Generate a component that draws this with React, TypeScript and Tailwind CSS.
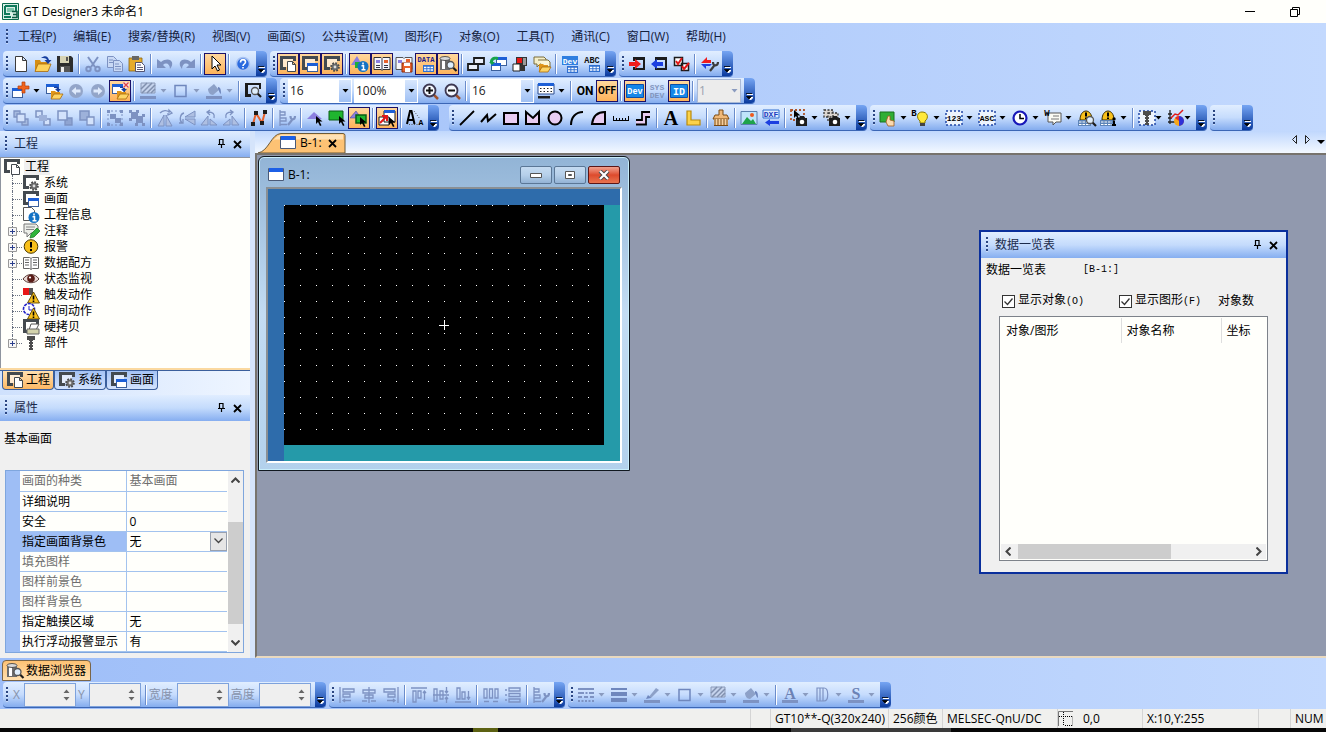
import { useState, type ReactNode } from 'react';

const D = '#7d92c2';
const K = '#1b1b1b';
const G = '#444a4f';

const frame = (
  <g>
    <path d="M3 3h10v8H3z" fill="#fff" opacity="0.6" />
    <path d="M0 0h16v5h-3V3H3v8h3v3H0z" fill={G} />
  </g>
);
const miniWin = (x: number, y: number, w = 10, h = 8) => (
  <g>
    <rect x={x + 0.5} y={y + 0.5} width={w} height={h} fill="#fff" stroke="#3b5f9c" />
    <rect x={x} y={y} width={w + 1} height="3" fill="#1c5fd6" />
  </g>
);
const folder = (
  <g>
    <path d="M5 8h4l1 1h4v6H5z" fill="#e0951a" />
    <path d="M8 11h9l-3 5H5z" fill="#fdd465" stroke="#a8690a" strokeWidth="0.8" />
  </g>
);
const grid = (x: number, y: number, c = '#2f6fd0') => (
  <g>
    <rect x={x} y={y} width="11" height="7" fill={c} />
    <path d={`M${x + 1} ${y + 2.5}h9M${x + 1} ${y + 5}h9`} stroke="#fff" strokeWidth="1.4" strokeDasharray="2.4 0.9" />
  </g>
);
const gear = (
  <g>
    <circle cx="11" cy="11" r="3.6" fill="#777" stroke="#4a4a4a" strokeWidth="2.4" strokeDasharray="1.6 1.2" />
    <circle cx="11" cy="11" r="3" fill="#6a6a6a" />
    <circle cx="11" cy="11" r="1.4" fill="#ddd" />
  </g>
);
const lens = (x: number, y: number) => (
  <g>
    <path d={`M${x + 2} ${y + 2}l4 4`} stroke={K} strokeWidth="2.2" />
    <circle cx={x} cy={y} r="3.5" fill="#dfeefc" stroke="#555" strokeWidth="1.3" />
  </g>
);
const arrowCursor = (x: number, y: number) => (
  <path d={`M${x} ${y}v8l2-2 2 4 1.500-.8-2-3.700h3z`} fill="#000" />
);
const warn = (
  <g>
    <path d="M10.500 5l6 11h-12z" fill="#f8c01b" stroke="#5a4300" strokeWidth="0.9" />
    <path d="M10.500 8.500v4M10.500 13.500v1.500" stroke="#000" strokeWidth="1.600" />
  </g>
);
const info = (
  <g>
    <circle cx="11" cy="10.500" r="5.500" fill="#1573c4" />
    <path d="M11 6.500v2M9.500 9.700h2v4h-2 4" stroke="#fff" strokeWidth="1.500" fill="none" />
  </g>
);
const screws = (
  <path d="M4 1h8v4h-2v1H6V5H4zM6 7h4v2H6zM6 10h4v2H6zM6 13h4v2H6zM7 6h2v9H7z" fill="#4c4c4c" />
);
const label = (t: string, x: number, y: number, size: number, fill: string) => (
  <text x={x} y={y} fontSize={size} fontWeight={700} fill={fill} textAnchor="middle" fontFamily="Liberation Mono, monospace">
    {t}
  </text>
);
const alarm = (
  <g>
    <path d="M2 10c0-12 12-12 12 0z" fill="#f8c01b" stroke="#3a2c00" />
    <path d="M8 2.500v4M8 7.500v1.500" stroke="#000" strokeWidth="2" />
    <rect x="0" y="10" width="13" height="6" fill="#5d84b8" />
    <path d="M1 12h11M1 14.500h11" stroke="#fff" strokeDasharray="2.500 1" />
  </g>
);
const camera = (
  <g>
    <path d="M5 8h3l1-2h4l1 2h2v8H5z" fill="#1d1d1d" />
    <circle cx="11" cy="12" r="2.300" fill="#fff" />
  </g>
);
const selBox = <rect x="0" y="1" width="16" height="14" fill="#eef4fd" stroke="#2146a5" strokeWidth="1.500" strokeDasharray="2 2" />;

const icons: Record<string, ReactNode> = {
  new: <path d="M2.500.5h7l4 4v11h-11zM9.500.5v4h4" fill="#fff" stroke="#3c3c3c" />,
  open: (
    <g>
      <path d="M0 4h5l1 2h7v9H0z" fill="#d58e14" />
      <path d="M3 8h13l-3 7.500H0z" fill="#fdd25c" stroke="#a8690a" strokeWidth="0.8" />
      <path d="M6 2c4-3 7-2 8 2h2.500l-3.500 4-3.500-4H12c-1-2-3-2-6-2z" fill="#173f9f" />
    </g>
  ),
  save: (
    <g>
      <path d="M0 0h14l2 2v14H0z" fill="#2d2d2d" />
      <path d="M3 0h9v7H3z" fill="#d7d3b4" />
      <path d="M9 1h2v4H9zM3 10h10v6H3z" fill="#555" />
      <path d="M4 11h3v5H4z" fill="#eee" />
    </g>
  ),
  cut: (
    <g fill="none" stroke={D} strokeWidth="2">
      <path d="M3 1l7 10M13 1L6 11" />
      <circle cx="3.500" cy="13" r="2.200" />
      <circle cx="12.500" cy="13" r="2.200" />
    </g>
  ),
  copy: (
    <g fill="#c9d9f5" stroke={D}>
      <path d="M.5.5h6l3 3v8h-9z" />
      <path d="M6.500 4.500h6l3 3v8h-9zM8 8h4M8 10.500h6M8 13h6M2 4h4M2 6.500h4" />
    </g>
  ),
  paste: (
    <g>
      <path d="M0 2h13v13H0z" fill="#e5ab2b" stroke="#8c6510" strokeWidth="0.8" />
      <path d="M3 0h7v4H3z" fill="#666" />
      <path d="M6.500 6.500h6l3 3v6h-9zM8 9h4M8 11.500h6M8 13.500h6" fill="#fff" stroke="#446" strokeWidth="0.9" />
    </g>
  ),
  undo: <path d="M0 3v9h9L6 9c3-3 7-1 7 4 6-7-1-13-9-7z" fill={D} />,
  redo: <path d="M16 3v9H7l3-3c-3-3-7-1-7 4-6-7 1-13 9-7z" fill={D} />,
  cursor: <path d="M5 0v13l3-3 2.500 5 2-1-2.500-5h4z" fill="#fff" stroke="#000" />,
  help: (
    <g>
      <circle cx="8" cy="8" r="6.500" fill="#2a6adf" stroke="#a9c3f2" strokeWidth="1.500" />
      <path d="M5.500 6.500c0-4 5-3.500 5-.5 0 2-2.500 2-2.500 4M8 11v1.500" stroke="#fff" strokeWidth="1.600" fill="none" />
    </g>
  ),
  project: (
    <g>
      {frame}
      <path d="M7.500 5.500h5l3 3v7h-8zM12.500 5.500v3h3" fill="#fff" stroke={G} />
    </g>
  ),
  screen: (
    <g>
      {frame}
      {miniWin(5, 7)}
    </g>
  ),
  system: (
    <g>
      {frame}
      {gear}
    </g>
  ),
  parts: (
    <g>
      <path d="M-1 9l6-9 5 9z" fill="#8b7fe0" />
      <path d="M3 6h8v6H3z" fill="#1fae37" />
      {info}
    </g>
  ),
  book: (
    <g>
      <path d="M0 1.500h7l1 1 1-1h7v12H9l-1 1-1-1H0z" fill="#f6f6fb" stroke="#333" />
      <path d="M2 4h4v3H2z" fill="#8b7fe0" />
      <path d="M10 4h4v3h-4z" fill="#e8622c" />
      <path d="M8 3v11M2 9.500h4M2 11.500h4M10 9.500h4M10 11.500h4" stroke="#334" />
    </g>
  ),
  library: (
    <g>
      <path d="M0 1.500h7l1 1 1-1h7v12H0z" fill="#f6f6fb" stroke="#555" />
      <path d="M2 4h4v3H2z" fill="#8b7fe0" />
      <path d="M10 3h4v3h-4z" fill="#e8622c" />
      <path d="M6 7h10v9H6z" fill="#e8622c" stroke="#8c2a08" />
      <path d="M8 7h6v3H8zM9 12h5v4H9z" fill="#fff" />
    </g>
  ),
  data: (
    <g>
      {label('DATA', 8, 6, 7, '#1a1a8c')}
      {grid(5, 9)}
    </g>
  ),
  browser: (
    <g>
      <path d="M0 2h10v12H0z" fill="#6c6c6c" />
      <path d="M2 4h3v9H2z" fill="#fff" />
      <ellipse cx="5" cy="2.500" rx="5" ry="2" fill="#d8d8d8" stroke="#333" strokeWidth="0.8" />
      {lens(10.5, 9)}
    </g>
  ),
  cascade: (
    <g fill="#e9eef8" stroke={K} strokeWidth="1.800">
      <path d="M6 2h10v6H6z" />
      <path d="M0 8h10v6H0z" />
    </g>
  ),
  screenSwap: (
    <g>
      {miniWin(6, 1)}
      {miniWin(1, 7, 9, 7)}
      <path d="M0 6c0-4 3-6 8-5v3c-3-1-5 0-5 2h2l-3 3-3-3z" fill="#16a34a" />
    </g>
  ),
  lampDev: (
    <g>
      <path d="M4 1h11v9H4z" fill="#333" />
      <path d="M5 2h5v5H5z" fill="#e81717" />
      <path d="M11 2h3v7h-3z" fill="#999" />
      <path d="M1 8h7v7H1z" fill="#fff" stroke="#222" />
      <path d="M8 10h5v5H8z" fill="#333" />
    </g>
  ),
  comments: (
    <g>
      <path d="M0 1h10l2 2v5H6l-3 3V8H0z" fill="#f4eec8" stroke="#7b6d3b" />
      <path d="M4 4h10l2 2v5h-6" fill="#fbf6da" stroke="#7b6d3b" />
      {folder}
    </g>
  ),
  dev: (
    <g>
      <path d="M0 0h16v9H0z" fill="#2f7fe0" />
      {label('Dev', 8, 7.5, 8, '#fff')}
      {grid(5, 10)}
    </g>
  ),
  abc: (
    <g>
      {label('ABC', 8, 7, 8.5, '#111')}
      {grid(5, 9)}
    </g>
  ),
  toGot: (
    <g>
      <path d="M4 1h12v13H4v-3h2v1h8V4H6v1H4z" fill={K} />
      <path d="M0 6h6V3l6 5-6 5v-3H0z" fill="#ef1d1d" />
    </g>
  ),
  fromGot: (
    <g>
      <path d="M4 1h12v13H4v-3h2v1h8V4H6v1H4z" fill={K} />
      <path d="M12 6H6V3L0 8l6 5v-3h6z" fill="#1c3fe0" />
    </g>
  ),
  verify: (
    <g>
      <path d="M1.500 1.500h8v8h-8zM8.500 7.500h7v7h-7z" fill="#fff" stroke={K} strokeWidth="1.500" />
      <path d="M3 5l2 3 4-6M9 10l2 3 5-6" stroke="#e01818" strokeWidth="2" fill="none" />
    </g>
  ),
  comm: (
    <g>
      <path d="M0 7l6-6v3h4v3z" fill="#ef1d1d" />
      <path d="M11 8H0l5 5v-3h4z" fill="#1c3fe0" />
      <path d="M9 15l4-5M12 6c0 5 5 4 5 0" stroke="#3b3b3b" strokeWidth="2.200" fill="none" />
    </g>
  ),
  newScreen: (
    <g>
      {miniWin(-1, 5, 10, 9)}
      <path d="M9-1h3v4h4v3h-4v4H9V6H5V3h4z" fill="#f0641e" stroke="#b53c06" strokeWidth="0.700" />
    </g>
  ),
  openScreen: (
    <g>
      {miniWin(0, 1, 12, 9)}
      {folder}
      <path d="M8 4c3-1 5 0 5 2h2l-3 3-3-3h2c0-1-1-1-3-1z" fill="#173f9f" />
    </g>
  ),
  prev: (
    <g>
      <circle cx="8" cy="8" r="7" fill="#93a5c9" />
      <path d="M3.500 8L8 4v2.500h4.500v3H8V12z" fill="#dfeafc" />
    </g>
  ),
  next: (
    <g>
      <circle cx="8" cy="8" r="7" fill="#93a5c9" />
      <path d="M12.500 8L8 4v2.500H3.500v3H8V12z" fill="#dfeafc" />
    </g>
  ),
  previewOpen: (
    <g>
      {miniWin(0, 1, 12, 9)}
      <path d="M8 4c3-1 5 0 5 2h2l-3 3-3-3h2c0-1-1-1-3-1z" fill="#173f9f" />
      <path d="M11-1h6v6h-6z" fill="#fbdcdc" />
      <path d="M11.500-.5l5 5m0-5l-5 5" stroke="#d44" strokeWidth="1.200" />
      {folder}
    </g>
  ),
  hatch: (
    <g>
      <path d="M1 0h14v10H1z" fill="#c5d3ec" stroke="#8b9ab8" />
      <path d="M1 6l6-6M2 10L12 0M7 10l8-8M11 10l4-4" stroke="#8090ae" strokeWidth="1.500" />
      <path d="M0 13h16v3H0z" fill={D} />
    </g>
  ),
  square: <path d="M2 2.500h11v11H2z" fill="none" stroke="#6f87bd" strokeWidth="1.500" />,
  fill: (
    <g>
      <path d="M2 6l6-5 5 6-6 5c-3 0-5-3-5-6z" fill="#8da1c8" />
      <path d="M12 4c3 0 3 4 3 7-2-1-2-4-3-5z" fill="#6f87bd" />
      <path d="M0 13h16v3H0z" fill={D} />
    </g>
  ),
  findScreen: (
    <g>
      <path d="M0 0h16v6h-2V2H3v9h3v3H0z" fill={K} />
      {lens(10, 8)}
    </g>
  ),
  zoomIn: (
    <g>
      <path d="M11 11l5 5" stroke="#a0522d" strokeWidth="2.500" />
      <circle cx="7.500" cy="7.500" r="6" fill="#f4f8ff" stroke="#3d3852" strokeWidth="1.800" />
      <path d="M4 7.500h7M7.500 4v7" stroke="#111" strokeWidth="2" />
    </g>
  ),
  zoomOut: (
    <g>
      <path d="M11 11l5 5" stroke="#a0522d" strokeWidth="2.500" />
      <circle cx="7.500" cy="7.500" r="6" fill="#f4f8ff" stroke="#3d3852" strokeWidth="1.800" />
      <path d="M4 7.500h7" stroke="#111" strokeWidth="2" />
    </g>
  ),
  gridColor: (
    <g>
      <path d="M0 1h16v10H0z" fill="#fff" stroke="#2a4d90" />
      <path d="M0 0h16v3H0z" fill="#1c5fd6" />
      <path d="M2 5.500h12M2 8.500h12" stroke="#222" strokeDasharray="1.500 2" />
      <path d="M0 13h12v2.500H0z" fill={K} />
    </g>
  ),
  devBox: (
    <g>
      <path d="M-.5 1.500h17v13h-17z" fill="#1687e8" stroke="#0c4fa8" />
      {label('Dev', 8, 11, 8.5, '#fff')}
    </g>
  ),
  sysDev: (
    <g>
      {label('SYS', 8, 7, 8, '#8295bd')}
      {label('DEV', 8, 15, 8, '#8295bd')}
    </g>
  ),
  idBox: (
    <g>
      <path d="M-.5 1.500h17v13h-17z" fill="#1687e8" stroke="#0c4fa8" />
      {label('ID', 8, 11.5, 10, '#fff')}
    </g>
  ),
  front: (
    <g>
      <path d="M1 1h6v6H1zM9 9h6v6H9z" fill="#a6badf" stroke={D} strokeWidth="1.300" />
      <path d="M4 4h8v8H4z" fill="#d3e2fb" stroke={D} strokeWidth="1.300" />
    </g>
  ),
  forward: (
    <g>
      <path d="M1 1h6v6H1zM9 9h6v6H9z" fill="#d3e2fb" stroke={D} strokeWidth="1.500" />
      <path d="M4 5h8v6H4z" fill="#9db1da" />
    </g>
  ),
  backward: (
    <g>
      <path d="M8 8h7v7H8z" fill="#8fa4d1" stroke={D} strokeWidth="1.300" />
      <path d="M1 1h9v9H1z" fill="#d3e2fb" stroke={D} strokeWidth="1.500" />
    </g>
  ),
  back: (
    <g>
      <path d="M1 1h9v9H1z" fill="#9db1da" stroke={D} strokeWidth="1.500" />
      <path d="M8 7h7v8H8z" fill="#d3e2fb" stroke={D} strokeWidth="1.300" />
    </g>
  ),
  group: (
    <g fill={D}>
      <path d="M0 0h3v3H0zM13 0h3v3h-3zM0 13h3v3H0zM13 13h3v3h-3zM3 4h6v5H3zM8 8h6v5H8z" />
      <path d="M4 1h9M1 4v9M15 4v9M4 15h9" stroke={D} strokeDasharray="2 2" />
    </g>
  ),
  ungroup: (
    <path
      d="M0 0h3v3H0zM7 0h3v3H7zM0 8h3v3H0zM2 2h7v7H2zM7 6h7v7H7zM13 4h3v3h-3zM13 13h3v3h-3zM6 13h3v3H6z"
      fill={D}
    />
  ),
  flipH: (
    <g>
      <path d="M7 5v11H1zM9 5v11h6z" fill="#aebfe2" stroke={D} />
      <path d="M3 3c3-3 7-3 9-1V0l3 3-4 2V3" fill="none" stroke={D} strokeWidth="1.300" />
    </g>
  ),
  flipV: (
    <g>
      <path d="M16 1v6H6zM6 9h10v6z" fill="#aebfe2" stroke={D} />
      <path d="M5 3C1 4 0 10 3 13m-3 0h4V9" fill="none" stroke={D} strokeWidth="1.300" />
    </g>
  ),
  rotL: (
    <g>
      <path d="M7 6v9H0zM9 15h7L9 9z" fill="#aebfe2" stroke={D} />
      <path d="M13 8c1-4-1-6-6-6m2-2L6 2l3 3" fill="none" stroke={D} strokeWidth="1.300" />
    </g>
  ),
  rotR: (
    <g>
      <path d="M9 6v9h7zM7 15H0l7-6z" fill="#aebfe2" stroke={D} />
      <path d="M3 8C2 4 4 2 9 2M7 0l3 2-3 3" fill="none" stroke={D} strokeWidth="1.300" />
    </g>
  ),
  vertex: (
    <g>
      <path d="M2 14L5 3l6 10 3-11" stroke="#e8622c" strokeWidth="2" fill="none" />
      <path d="M0 12h4v4H0zM3 1h4v4H3zM9 11h4v4H9zM12 0h4v4h-4z" fill={K} />
    </g>
  ),
  alignSet: (
    <g fill="none" stroke={D} strokeWidth="1.300">
      <path d="M1 0v16M1 2h5v3H1zM1 8h6v3H1zM1 14.500h7" />
      <path d="M9 15l4-5M11.500 6c0 5 4.500 4 4.500 0" strokeWidth="2.200" />
    </g>
  ),
  selShape: (
    <g>
      <path d="M0 9l7-7 8 7z" fill="#8b7fe0" />
      {arrowCursor(9, 6)}
    </g>
  ),
  selObject: (
    <g>
      <path d="M0 1h14v9H0z" fill="#1fb52f" stroke="#0a5f16" />
      {arrowCursor(10, 6)}
    </g>
  ),
  selBoth: (
    <g>
      <path d="M-1 8l6-7 5 7z" fill="#8b7fe0" stroke="#4d4499" strokeWidth="0.600" />
      <path d="M5 5h10v8H5z" fill="#1fb52f" stroke="#0a5f16" strokeWidth="1.500" />
      {arrowCursor(9, 7)}
    </g>
  ),
  selectWin: (
    <g>
      <path d="M0 7h10v8H0zM5 1h11v11H5z" fill="#fff" stroke={K} />
      <path d="M5 0h11v3H5z" fill="#1c5fd6" />
      <path d="M1 13l6-6M3 6h5v5" stroke="#e01818" strokeWidth="2" fill="none" />
      {arrowCursor(10, 7)}
    </g>
  ),
  fontScale: (
    <g>
      <path d="M7 1l6 8M2 14.500h11" stroke="#555" strokeDasharray="1 1.500" />
      <path d="M0 14L3 1h1.500l3 13M1.500 10h5" stroke="#000" strokeWidth="2" fill="none" />
      {label('A', 14, 15, 8, '#000')}
    </g>
  ),
  line: <path d="M1 15L15 1" stroke="#000" strokeWidth="1.800" />,
  polyline: <path d="M0 12l6-7 1 6 8-7" stroke="#000" strokeWidth="2" fill="none" />,
  rect: <path d="M1 3h14v11H1z" fill="#e9cdf2" stroke="#000" strokeWidth="2" />,
  polygon: <path d="M1 2l7 6 6-6v12H1z" fill="#e9cdf2" stroke="#000" strokeWidth="2" />,
  circle: <circle cx="8" cy="8" r="6.500" fill="#e9cdf2" stroke="#000" strokeWidth="2" />,
  arc: <path d="M2 15C2 7 7 2 14 2" fill="none" stroke="#000" strokeWidth="2" />,
  sector: <path d="M1 14C2 6 7 2 14 2v12z" fill="#e9cdf2" stroke="#000" strokeWidth="2" />,
  scale: <path d="M0 10.500h16M.5 6v4M3.500 8v2M6.500 8v2M9.500 8v2M12.500 8v2M15.500 6v4" stroke="#000" />,
  piping: (
    <g>
      <path d="M1 10h6V2h8v5h-4v7H1z" fill="#e9cdf2" />
      <path d="M1 10h6V2h8M1 14.500h10V7h4" fill="none" stroke="#000" strokeWidth="1.800" />
    </g>
  ),
  text: (
    <text x="8" y="15" fontSize="20" fontWeight="700" textAnchor="middle" fontFamily="Liberation Serif, serif">
      A
    </text>
  ),
  logoText: <path d="M2 1h4v9h9v5H2z" fill="#fbd24a" stroke="#b98a0a" strokeWidth="1.200" />,
  paint: (
    <g>
      <path d="M6 0h4v5h4l2 4H0l2-4h4z" fill="#f0b878" stroke="#7b4a12" />
      <path d="M1 9h14v6H1z" fill="#f6cf9f" />
      <path d="M2 9v6M5 9v6M8 9v6M11 9v6M14 9v6M1 15.500h14" stroke="#7b4a12" />
    </g>
  ),
  image: (
    <g>
      <path d="M0 1.500h16v13H0z" fill="#bfe4fb" stroke="#5a7fae" />
      <path d="M1 14l5-7 4 4 2-2 3 5z" fill="#1fa34a" />
      <circle cx="11" cy="5" r="2" fill="#ef5a1d" />
    </g>
  ),
  dxf: (
    <g>
      <path d="M0 0h16v8H0z" fill="#dfeafd" stroke="#2f6fd0" />
      {label('DXF', 8, 7, 8, '#1c3fc0')}
      <path d="M16 11H7V9l-5 3.500L7 16v-2h9z" fill="#1c3fe0" />
    </g>
  ),
  capture: (
    <g>
      <path d="M0 0h13v10H0z" fill="none" stroke="#b0562a" strokeDasharray="2 2" strokeWidth="1.800" />
      {camera}
      {arrowCursor(3, 0)}
    </g>
  ),
  captureArea: (
    <g>
      <path d="M0 0h9v7H0zM4 3h10v8H4z" fill="#dcd6d0" stroke="#333" strokeDasharray="2 1.500" strokeWidth="1.300" />
      {camera}
    </g>
  ),
  touch: (
    <g>
      <path d="M0 2h14v10H0z" fill="#2fae35" stroke="#17701c" />
      <path d="M8 6h2v4l4 1v5H8l-2-4z" fill="#fbdab0" stroke="#a05a1d" strokeWidth="0.800" />
    </g>
  ),
  lamp: (
    <g>
      <path d="M9 2c6 0 7 6 3 9v2H7v-2C3 8 4 2 9 2z" fill="#ffe93b" stroke="#8a7a00" />
      <path d="M7 13h5v3H7z" fill="#444" />
      {label('B', 1, 6, 9, '#000')}
    </g>
  ),
  numeric: (
    <g>
      {selBox}
      {label('123', 8, 11, 8, '#000')}
    </g>
  ),
  ascii: (
    <g>
      {selBox}
      {label('ASC', 8, 11, 8, '#000')}
    </g>
  ),
  clock: (
    <g>
      <circle cx="8" cy="8" r="6.500" fill="#fff" stroke="#1818b8" strokeWidth="2.200" />
      <path d="M8 4v4.500h4" stroke="#000" strokeWidth="1.500" fill="none" />
    </g>
  ),
  wordComment: (
    <g>
      <path d="M3 3h13v9h-5l-3 3v-3H3z" fill="#fbfbf4" stroke="#555" />
      <path d="M8 6h6M6 9h8" stroke="#777" />
      {label('W', 2, 6, 9, '#000')}
    </g>
  ),
  alarmFind: (
    <g>
      {alarm}
      {lens(12, 10)}
    </g>
  ),
  alarmInfo: (
    <g>
      {alarm}
      <circle cx="14" cy="9" r="1.700" fill="#000" />
      <path d="M14 11v4M12 15h4" stroke="#000" strokeWidth="2" />
    </g>
  ),
  bolt: (
    <g>
      {selBox}
      {screws}
    </g>
  ),
  graph: (
    <g>
      <path d="M2 0v14M0 12h7M0 4h4M0 8h4" stroke="#222" strokeWidth="1.300" />
      <path d="M3 8l4-4 3 1 5-5" stroke="#e01818" strokeWidth="1.500" fill="none" />
      <circle cx="11" cy="11" r="5" fill="#f5a71b" />
      <path d="M11 11V6a5 5 0 010 10z" fill="#3030d8" />
      <path d="M11 11l-4-3a5 5 0 014-2z" fill="#e82c2c" />
    </g>
  ),
  alL: <path d="M1 0v16M4 2h11v3H4zM4 7h7v3H4zM4 13.500h8M6 12l-2 1.500L6 15" fill="none" stroke={D} strokeWidth="1.300" />,
  alC: <path d="M8 0v16M2 3h12v3H2zM4 8h8v3H4zM1 14h5M10 14h5" fill="none" stroke={D} strokeWidth="1.300" />,
  alR: <path d="M15 0v16M1 2h11v3H1zM5 7h7v3H5zM4 13.500h8M10 12l2 1.500L10 15" fill="none" stroke={D} strokeWidth="1.300" />,
  alT: <path d="M0 1h16M2 4h3v11H2zM7 4h3v7H7zM13.500 4v9M12 6l1.500-2L15 6" fill="none" stroke={D} strokeWidth="1.300" />,
  alM: <path d="M0 8h11M1 2h3v12H1zM7 4h3v8H7zM13.500 0v5M13.500 11v5M11 8h5M12 4l1.500 2L15 4M12 12l1.500-2 1.500 2" fill="none" stroke={D} strokeWidth="1.300" />,
  alB: <path d="M0 15h16M2 1h3v11H2zM7 5h3v7H7zM13.500 4v9M12 10l1.500 2L15 10" fill="none" stroke={D} strokeWidth="1.300" />,
  spH: <path d="M1 2h3v9H1zM6.500 2h3v9h-3zM12 2h3v9h-3zM1 14.500h5M10 14.500h5" fill="none" stroke={D} strokeWidth="1.300" />,
  spV: <path d="M4 1h11v3H4zM4 6.500h11v3H4zM4 12h11v3H4zM0 3h2M0 8h2M0 13h2" fill="none" stroke={D} strokeWidth="1.300" />,
  dash: (
    <g fill="none" stroke={D} strokeWidth="2">
      <path d="M0 2h16" />
      <path d="M0 6h16" strokeDasharray="6 1.500 2 1.500" />
      <path d="M0 10h16" strokeDasharray="4 2" />
      <path d="M0 14h16" strokeDasharray="2 1.500" />
    </g>
  ),
  width: <path d="M0 1h16v2H0zM0 5h16v4H0zM0 11h16v4H0z" fill="#6f87bd" />,
  pen: (
    <g>
      <path d="M4 11l8-10 3 2-8 8z" fill="#8da1c8" />
      <path d="M4 8l3 3-5 1z" fill="#6f87bd" />
      <path d="M0 13h16v3H0z" fill={D} />
    </g>
  ),
  charA: (
    <g>
      <text x="8" y="12" fontSize="16" fontWeight="700" fill="#6c82b5" textAnchor="middle" fontFamily="Liberation Serif, serif">
        A
      </text>
      <path d="M0 13h16v3H0z" fill={D} />
    </g>
  ),
  charD: <path d="M2 1h7c5 0 5 13 0 13H2zM5 1v13M8 1v13" fill="none" stroke={D} strokeWidth="1.200" />,
  charS: (
    <g>
      <text x="8" y="12" fontSize="16" fontWeight="700" fill="#6c82b5" textAnchor="middle" fontFamily="Liberation Serif, serif">
        S
      </text>
      <path d="M0 13h16v3H0z" fill={D} />
    </g>
  ),
  projectInfo: (
    <g>
      <path d="M.5.5h8l3 3v10H.5z" fill="#fff" stroke="#555" />
      {info}
    </g>
  ),
  note: (
    <g>
      <path d="M1 1h12l2 2v7H8l-4 4v-4H1z" fill="#eceee8" stroke="#777" />
      <path d="M3 4h9M3 6.500h8" stroke="#888" />
      <path d="M7 15l1-4 6-6 3 3-6 6z" fill="#2fb53a" stroke="#14701c" strokeWidth="0.700" />
    </g>
  ),
  alert: (
    <g>
      <circle cx="8" cy="7.500" r="6.800" fill="#f8c01b" stroke="#4a3800" />
      <path d="M8 3v5.500M8 10v2" stroke="#000" strokeWidth="2" />
    </g>
  ),
  recipe: (
    <path
      d="M.5 2.500h6l1.500 1 1.500-1h6v11h-6l-1.500 1-1.500-1h-6zM8 4v10M2 5h4M2 7.500h4M2 10h4M10 5h4M10 7.500h4M10 10h4"
      fill="#fff"
      stroke="#666"
    />
  ),
  eye: (
    <g>
      <path d="M0 8c4-6 12-6 16 0-4 5-12 5-16 0z" fill="#e8d7d2" stroke="#5a3a34" />
      <circle cx="8" cy="7.500" r="3.800" fill="#5a1d16" />
      <circle cx="7" cy="6.500" r="1.100" fill="#fff" />
    </g>
  ),
  trigger: (
    <g>
      <path d="M0 1h6v7H0z" fill="#e81717" />
      <path d="M6 1h4v7H6z" fill="#555" />
      {warn}
    </g>
  ),
  timeAction: (
    <g>
      <circle cx="6" cy="6" r="5.500" fill="#fff" stroke="#2323c8" strokeWidth="1.600" strokeDasharray="3 1" />
      <path d="M6 3v4h3" stroke="#2323c8" fill="none" />
      {warn}
    </g>
  ),
  hardcopy: (
    <g>
      {frame}
      <path d="M8 5h8l-3 6H6z" fill="#fff" stroke="#555" />
      <path d="M4 10h12v5H4z" fill="#d3d3ac" stroke="#666" />
    </g>
  ),
  part: screws,
  window: (
    <g>
      <path d="M.5 1.500h15v12H.5z" fill="#fff" stroke="#4a5a78" />
      <path d="M1 1h14v4H1z" fill="#1c5fe6" />
    </g>
  ),
};

function Icon({ name }: { name: string }) {
  return (
    <svg viewBox="0 0 16 16" className="size-4 shrink-0 overflow-visible" aria-hidden="true">
      {icons[name]}
    </svg>
  );
}

function Grip() {
  return <div className="h-4 w-[2px] shrink-0 bg-[repeating-linear-gradient(to_bottom,#2b4682_0_2px,#ffffff66_2px_3px,transparent_3px_4px)]" />;
}

function Sep() {
  return (
    <div className="flex w-[6px] shrink-0 justify-center">
      <div className="h-5 w-px bg-[#6a8ccb]" />
      <div className="h-5 w-px bg-white" />
    </div>
  );
}

function Down({ dim }: { dim?: boolean }) {
  return (
    <svg viewBox="0 0 7 4" className="h-1 w-[7px] shrink-0" aria-hidden="true">
      <path d="M.5 0h6L3.500 3.500z" fill={dim ? '#8a9bbf' : '#000'} />
    </svg>
  );
}

/* "|" is a separator, "!" marks a pressed button, ":" adds a dropdown arrow, "~" dims that arrow, "^" packs it tighter */
function Tools({ list }: { list: string }) {
  return (
    <>
      {list.split(' ').map((item, i) => {
        if (item === '|') return <Sep key={i} />;
        const name = item.replace(/[!:~^]/g, '');
        const on = item.includes('!');
        const menu = item.includes(':');
        const size = item.includes('^') ? 'w-[29px] gap-0 pl-[3px]' : menu ? 'w-[33px] gap-1 pl-[3px]' : 'w-[22px] justify-center';
        return (
          <button
            key={i}
            type="button"
            aria-label={name}
            aria-pressed={on}
            className={`flex h-[22px] shrink-0 items-center ${size} ${
              on ? 'border border-[#1a1068] bg-linear-to-b from-[#ffd79c] to-[#fdb35a]' : 'hover:bg-[#ffe3b0]'
            }`}
          >
            <Icon name={name} />
            {menu && <Down dim={item.includes('~')} />}
          </button>
        );
      })}
    </>
  );
}

function Bar({ list, children, className = '' }: { list?: string; children?: ReactNode; className?: string }) {
  return (
    <div
      role="toolbar"
      className={`flex h-[26px] shrink-0 items-center rounded border-b border-[#3b66b5] bg-linear-to-b from-[#e1eeff] via-[#c6dcfd] to-[#84acee] pl-[3px] ${className}`}
    >
      <Grip />
      <div className="flex items-center px-[2px]">
        {list && <Tools list={list} />}
        {children}
      </div>
      <button
        type="button"
        aria-label="more"
        className="ml-auto flex h-full w-[11px] items-end justify-center rounded-r bg-linear-to-b from-[#76a5f3] to-[#0a3a9e] pb-[3px]"
      >
        <svg viewBox="0 0 7 7" className="size-[7px]" aria-hidden="true">
          <path d="M1 1.500h6M2 4.500h5L4.500 7z" stroke="#fff" fill="#fff" />
          <path d="M0 .5h6M.5 3.500h5L3 6z" stroke="#000" fill="#000" strokeWidth="0.800" />
        </svg>
      </button>
    </div>
  );
}

function Combo({ value, label, disabled }: { value: string; label: string; disabled?: boolean }) {
  return (
    <div
      className={`relative mx-px flex h-6 items-center border ${
        disabled ? 'w-[44px] border-[#a9b9d6] bg-[#ececec]' : 'w-16 border-white bg-white'
      }`}
    >
      <select
        aria-label={label}
        disabled={disabled}
        className={`w-full appearance-none bg-transparent pl-px text-xs outline-none ${disabled ? 'text-gray-400' : 'text-[#222]'}`}
      >
        <option>{value}</option>
      </select>
      <div
        className={`pointer-events-none absolute inset-y-0 right-0 flex w-3 items-center justify-center ${
          disabled ? '' : 'bg-linear-to-b from-[#d8e7fd] to-[#9fc0f4]'
        }`}
      >
        <Down dim={disabled} />
      </div>
    </div>
  );
}

function Spin({ label, text }: { label: string; text: string }) {
  return (
    <label className="flex items-center gap-1 text-xs text-[#8793ab]">
      {text}
      <span className="relative mr-[2px] flex h-6 w-[52px] border border-[#7ea2dc] bg-[#efefef]">
        <input type="number" aria-label={label} disabled className="w-full bg-transparent [appearance:textfield]" />
        <svg viewBox="0 0 7 12" className="absolute right-[5px] top-[5px] h-3 w-[7px]" aria-hidden="true">
          <path d="M.5 4h6l-3-3.500zM.5 8h6l-3 3.500z" fill="#666" />
        </svg>
      </span>
    </label>
  );
}

function PinClose() {
  return (
    <div className="ml-auto flex items-center gap-[7px] pr-1">
      <button type="button" aria-label="pin">
        <svg viewBox="0 0 9 10" className="h-[10px] w-[9px]" aria-hidden="true">
          <path d="M2.500 0v5M2 .5h4.500M6 0v5M1 5.500h7M4.500 6v3" stroke="#000" fill="none" strokeWidth="1.200" />
        </svg>
      </button>
      <button type="button" aria-label="close">
        <svg viewBox="0 0 9 9" className="size-[9px]" aria-hidden="true">
          <path d="M1 1l7 7M8 1L1 8" stroke="#000" strokeWidth="1.800" />
        </svg>
      </button>
    </div>
  );
}

function PanelHead({ title }: { title: string }) {
  return (
    <div className="flex h-[26px] shrink-0 items-center bg-linear-to-b from-[#e0edff] via-[#c4dbfc] to-[#86aef0] pl-[5px] pr-1 text-xs text-[#1a2a4a]">
      <Grip />
      <h2 className="pl-[7px]">{title}</h2>
      <PinClose />
    </div>
  );
}

const menus = [
  '工程(P)', '编辑(E)', '搜索/替换(R)', '视图(V)', '画面(S)', '公共设置(M)',
  '图形(F)', '对象(O)', '工具(T)', '通讯(C)', '窗口(W)', '帮助(H)',
];

const tree = [
  { icon: 'system', name: '系统' },
  { icon: 'screen', name: '画面' },
  { icon: 'projectInfo', name: '工程信息' },
  { icon: 'note', name: '注释', more: true },
  { icon: 'alert', name: '报警', more: true },
  { icon: 'recipe', name: '数据配方', more: true },
  { icon: 'eye', name: '状态监视' },
  { icon: 'trigger', name: '触发动作' },
  { icon: 'timeAction', name: '时间动作' },
  { icon: 'hardcopy', name: '硬拷贝' },
  { icon: 'part', name: '部件', more: true },
];

const props = [
  { name: '画面的种类', value: '基本画面', dim: true },
  { name: '详细说明', value: '' },
  { name: '安全', value: '0' },
  { name: '指定画面背景色', value: '无', active: true },
  { name: '填充图样', value: '', dim: true },
  { name: '图样前景色', value: '', dim: true },
  { name: '图样背景色', value: '', dim: true },
  { name: '指定触摸区域', value: '无' },
  { name: '执行浮动报警显示', value: '有' },
];

function ProjectPanel() {
  const [tab, setTab] = useState('工程');
  return (
    <section className="flex h-[264px] shrink-0 flex-col">
      <PanelHead title="工程" />
      <div className="flex-1 overflow-hidden border-l border-t border-[#8f959f] bg-[#fffffb] pt-px text-xs text-black">
        <div className="flex h-4 items-center gap-1 pl-[3px]">
          <Icon name="project" />
          <span className="bg-[#f0f0f0] px-px leading-4">工程</span>
        </div>
        <ul>
          {tree.map((node, i) => (
            <li key={node.name} className="relative flex h-4 items-center gap-[5px] pl-[22px]">
              <span className={`absolute left-[11px] top-0 border-l border-dotted border-gray-500 ${i === tree.length - 1 ? 'h-2' : 'h-4'}`} />
              <span className="absolute left-[11px] top-2 w-[10px] border-t border-dotted border-gray-500" />
              {node.more && (
                <svg viewBox="0 0 9 9" className="absolute left-[7px] top-1 size-[9px]" aria-hidden="true">
                  <path d="M.5.5h8v8h-8z" fill="#f6f6f6" stroke="#999" />
                  <path d="M2 4.500h5M4.500 2v5" stroke="#2b3f8c" />
                </svg>
              )}
              <Icon name={node.icon} />
              <span className="leading-4">{node.name}</span>
            </li>
          ))}
        </ul>
      </div>
      <div className="h-[3px] shrink-0 border-b border-[#3b5f9c] bg-[#fbd9a0]" />
      <div className="flex h-6 shrink-0 items-start bg-linear-to-r from-[#cfe1fd] to-[#eef5ff] pl-[2px]" role="tablist">
        {[
          ['project', '工程'],
          ['system', '系统'],
          ['screen', '画面'],
        ].map(([icon, name]) => (
          <button
            key={name}
            type="button"
            role="tab"
            aria-selected={tab === name}
            onClick={() => setTab(name)}
            className={`flex h-[19px] w-[52px] items-center gap-[3px] rounded-b-sm border border-t-0 border-[#3b5f9c] pl-1 text-xs text-black ${
              tab === name ? 'bg-linear-to-b from-[#ffe0b0] to-[#fdb863]' : 'bg-linear-to-b from-[#a5c3f5] to-[#d3e3fd]'
            }`}
          >
            <Icon name={icon} />
            <span className="leading-4">{name}</span>
          </button>
        ))}
      </div>
    </section>
  );
}

function PropertyPanel() {
  return (
    <section className="flex min-h-0 flex-1 flex-col bg-[#f0f0f0]">
      <PanelHead title="属性" />
      <p className="pb-[21px] pl-1 pt-2 text-xs leading-5 text-black">基本画面</p>
      <div className="ml-[5px] mr-[6px] flex h-[183px] shrink-0 overflow-hidden border border-[#7fa6dd] bg-[#fffffb]">
        <div className="w-[14px] shrink-0 bg-[#9ebef5]" />
        <table className="w-[207px] shrink-0 table-fixed border-collapse self-start text-xs">
          <tbody>
            {props.map((p) => (
              <tr key={p.name} className={`h-5 border-b border-[#a3c3ee] ${p.dim ? 'text-[#6e6e6e]' : 'text-black'}`}>
                <th
                  scope="row"
                  className={`w-[106px] whitespace-nowrap border-r border-[#a3c3ee] p-0 pl-[2px] text-left font-normal leading-[19px] ${p.active ? 'bg-[#9ebef5]' : ''}`}
                >
                  {p.name}
                </th>
                <td className="p-0 pl-[3px] leading-[19px]">
                  {p.active ? (
                    <div className="flex h-[19px] items-center">
                      <select aria-label={p.name} className="w-0 flex-1 appearance-none bg-transparent outline-none">
                        <option>{p.value}</option>
                      </select>
                      <span className="pointer-events-none flex h-[19px] w-[17px] items-center justify-center border border-gray-400 bg-[#e6e6e6]">
                        <svg viewBox="0 0 9 6" className="h-[6px] w-[9px]" aria-hidden="true">
                          <path d="M.5.5l4 4 4-4" fill="none" stroke="#444" strokeWidth="1.300" />
                        </svg>
                      </span>
                    </div>
                  ) : (
                    p.value
                  )}
                </td>
              </tr>
            ))}
          </tbody>
        </table>
        <div className="ml-px flex flex-1 flex-col items-center bg-[#f0f0f0] py-[6px]">
          <svg viewBox="0 0 9 6" className="h-[6px] w-[9px]" aria-hidden="true">
            <path d="M.5 5.500l4-4 4 4" fill="none" stroke="#444" strokeWidth="2" />
          </svg>
          <div className="mt-[39px] h-[102px] w-full bg-[#cdcdcd]" />
          <svg viewBox="0 0 9 6" className="mt-auto h-[6px] w-[9px]" aria-hidden="true">
            <path d="M.5.5l4 4 4-4" fill="none" stroke="#444" strokeWidth="2" />
          </svg>
        </div>
      </div>
    </section>
  );
}

function ScreenWindow() {
  const btn = 'flex h-[18px] w-8 items-center justify-center rounded-xs border';
  return (
    <div className="absolute left-px top-px flex w-[372px] flex-col rounded-t-md border border-[#101820] bg-linear-to-b from-[#92b4d6] via-[#c3dcf3] to-[#b3d1ec] shadow-[inset_0_0_0_1px_#c9eefb]">
      <div className="flex h-[30px] items-center pb-[1px] pl-[9px] pr-[9px] pt-[6px]">
        <Icon name="window" />
        <h2 className="pl-1 text-xs text-black">B-1:</h2>
        <div className="ml-auto flex gap-[2px]">
          <button type="button" aria-label="minimize" className={`${btn} border-[#5b7796] bg-linear-to-b from-[#c5dbf1] via-[#b6d0ea] to-[#93b3d5]`}>
            <svg viewBox="0 0 12 6" className="h-[6px] w-3" aria-hidden="true">
              <path d="M.5 1.500h11v4H.5z" fill="#fff" stroke="#555" />
            </svg>
          </button>
          <button type="button" aria-label="maximize" className={`${btn} border-[#5b7796] bg-linear-to-b from-[#c5dbf1] via-[#b6d0ea] to-[#93b3d5]`}>
            <svg viewBox="0 0 12 10" className="h-[10px] w-3" aria-hidden="true">
              <path d="M1.500 1.500h9v7h-9z" fill="#fff" stroke="#555" />
              <path d="M4.500 4.500h3v1h-3z" fill="#a9c4e0" stroke="#555" />
            </svg>
          </button>
          <button type="button" aria-label="close" className={`${btn} border-[#5c1616] bg-linear-to-b from-[#f0a08e] via-[#dd4a2c] to-[#e87450]`}>
            <svg viewBox="0 0 12 10" className="h-[10px] w-3" aria-hidden="true">
              <path d="M2 1l8 8M10 1L2 9" stroke="#444" strokeWidth="4" />
              <path d="M2 1l8 8M10 1L2 9" stroke="#fff" strokeWidth="2.200" />
            </svg>
          </button>
        </div>
      </div>
      <div className="mx-[7px] mb-[7px] border-2 border-b-white border-l-[#8a8f94] border-r-white border-t-[#8a8f94] bg-[#2e6cab] pl-4 pt-4">
        <div className="bg-[#259aa9] pb-4">
          <svg viewBox="0 0 320 240" className="h-[240px] w-[320px]" shapeRendering="crispEdges" aria-hidden="true">
            <defs>
              <pattern id="dots" width="16" height="16" patternUnits="userSpaceOnUse">
                <rect width="1" height="1" fill="#fff" />
              </pattern>
            </defs>
            <rect width="320" height="240" fill="#000" />
            <rect width="320" height="240" fill="url(#dots)" />
            <path d="M155 120.500h10M160.500 115v10" stroke="#fff" />
          </svg>
        </div>
      </div>
    </div>
  );
}

function DataList() {
  return (
    <section className="absolute right-[38px] top-[75px] flex h-[344px] w-[309px] flex-col border-2 border-[#0a2f9c] bg-[#f0f0f0] text-xs text-black">
      <PanelHead title="数据一览表" />
      <div className="flex gap-[37px] pl-[5px] pt-[2px] leading-5">
        <span>数据一览表</span>
        <span className="font-['Liberation_Mono'] text-[10px]">[B-1:]</span>
      </div>
      <div className="flex items-center pl-[21px] pt-[10px] leading-5">
        <label className="flex w-[117px] items-center gap-[3px]">
          <input type="checkbox" defaultChecked className="peer sr-only" />
          <Check />
          <span>
            显示对象<span className="font-['Liberation_Mono'] text-[10px]">(O)</span>
          </span>
        </label>
        <label className="flex w-[99px] items-center gap-[3px]">
          <input type="checkbox" defaultChecked className="peer sr-only" />
          <Check />
          <span>
            显示图形<span className="font-['Liberation_Mono'] text-[10px]">(F)</span>
          </span>
        </label>
        <span>对象数</span>
      </div>
      <div className="mx-[18px] mb-[11px] mt-1 flex flex-1 flex-col border border-[#7d828a] bg-[#fffffb] p-px">
        <table className="w-full table-fixed border-collapse">
          <thead>
            <tr className="h-[25px] text-left">
              <th className="w-[120px] border-r border-[#dedede] p-0 pl-[5px] font-normal">对象/图形</th>
              <th className="w-[100px] border-r border-[#dedede] p-0 pl-[5px] font-normal">对象名称</th>
              <th className="p-0 pl-[5px] font-normal">坐标</th>
            </tr>
          </thead>
        </table>
        <div className="mt-auto flex h-[15px] items-center bg-[#f0f0f0] px-1">
          <svg viewBox="0 0 6 9" className="h-[9px] w-[6px]" aria-hidden="true">
            <path d="M5.500.5l-4 4 4 4" fill="none" stroke="#444" strokeWidth="2" />
          </svg>
          <div className="ml-[7px] h-full w-[153px] bg-[#cdcdcd]" />
          <svg viewBox="0 0 6 9" className="ml-auto h-[9px] w-[6px]" aria-hidden="true">
            <path d="M.5.5l4 4-4 4" fill="none" stroke="#444" strokeWidth="2" />
          </svg>
        </div>
      </div>
    </section>
  );
}

function Check() {
  return (
    <svg viewBox="0 0 13 13" className="size-[13px] shrink-0 peer-not-checked:[&_path]:hidden" aria-hidden="true">
      <rect x="0.5" y="0.5" width="12" height="12" fill="#fff" stroke="#333" />
      <path d="M2.500 6.500l3 3 5-6" fill="none" stroke="#333" strokeWidth="1.300" />
    </svg>
  );
}

function Workspace() {
  return (
    <main className="flex min-w-0 flex-1 flex-col">
      <div className="flex h-[22px] items-end bg-linear-to-b from-[#c0d7fd] to-[#f3f8ff]">
        <button type="button" className="relative flex h-5 w-[92px] items-center pl-[25px] text-xs text-black">
          <svg viewBox="0 0 92 20" className="absolute inset-0 h-5 w-[92px]" aria-hidden="true">
            <path d="M3 20C14 18 16 1 26 .5h62q2 0 2 2V20z" fill="#fdc274" stroke="#6b5a3a" />
            <path d="M18 8Q22 2 27 1.500h61v5H20z" fill="#ffe1b5" />
          </svg>
          <span className="relative flex items-center gap-1">
            <Icon name="window" />
            B-1:
            <svg viewBox="0 0 9 9" className="ml-[2px] size-[9px]" aria-hidden="true">
              <path d="M1 1l7 7M8 1L1 8" stroke="#000" strokeWidth="1.800" />
            </svg>
          </span>
        </button>
        <svg viewBox="0 0 36 10" className="mb-2 ml-auto h-[10px] w-9" aria-hidden="true">
          <path d="M6.500.5v8L2.500 4.500zM15.500.5v8l4-4z" fill="none" stroke="#222" />
          <path d="M27 5h8l-4 4z" fill="#000" />
        </svg>
      </div>
      <div className="relative flex-1 overflow-hidden border-b-2 border-l-2 border-t-2 border-b-[#e9d9bf] border-l-[#77736d] border-t-[#77736d] bg-[#9199ae]">
        <ScreenWindow />
        <DataList />
      </div>
    </main>
  );
}

function StatusCell({ children, className }: { children?: ReactNode; className: string }) {
  return <div className={`flex h-full items-center border-l border-[#d4d4d4] pl-1 ${className}`}>{children}</div>;
}

export default function App() {
  return (
    <div className="flex h-screen flex-col overflow-hidden bg-linear-to-r from-[#9ebef8] to-[#c3d9fe] font-['Open_Sans','Noto_Sans_CJK_SC',sans-serif] whitespace-nowrap">
      <header className="flex h-[23px] shrink-0 items-center bg-[#fffffb] pl-[2px] text-xs text-black">
        <svg viewBox="0 0 17 17" className="size-[17px]" aria-hidden="true">
          <path d="M.5.5h16v16H.5z" fill="#d9f0e6" stroke="#0a6a4c" />
          <path d="M3 3h11v5M3 3v8h5M2 14h7" stroke="#0f7a5a" strokeWidth="2" fill="none" />
          <path d="M5 5h7v4H5z" fill="#7cc4aa" />
          <path d="M10 8.500h5v6h-5M11 11.500h4" stroke="#0a5a42" strokeWidth="1.600" fill="none" />
        </svg>
        <h1 className="pl-1">GT Designer3 未命名1</h1>
        <div className="ml-auto flex items-center gap-[35px] pr-[26px]">
          <button type="button" aria-label="minimize">
            <svg viewBox="0 0 10 10" className="size-[10px]" aria-hidden="true">
              <path d="M0 4.500h10" stroke="#000" />
            </svg>
          </button>
          <button type="button" aria-label="restore">
            <svg viewBox="0 0 10 10" className="size-[10px]" aria-hidden="true">
              <path d="M.5 2.500h7v7h-7zM2.500 2V.5h7v7H8" fill="none" stroke="#000" />
            </svg>
          </button>
        </div>
      </header>

      <nav className="flex h-[27px] shrink-0 items-center pl-[6px] text-xs text-[#14213d]">
        <Grip />
        <div className="flex gap-px pl-[2px]">
          {menus.map((m) => (
            <a key={m} href="#" className="px-2 leading-5 hover:bg-[#ffe3b0]">
              {m}
            </a>
          ))}
        </div>
      </nav>

      <div className="flex shrink-0 flex-col gap-px pt-px">
        <div className="flex gap-[3px] pl-[3px]">
          <Bar list="new open save | cut copy paste | undo redo | !cursor | help" />
          <Bar list="!project !screen !system | !parts !book library !data !browser | cascade screenSwap lampDev comments | dev abc" />
          <Bar list="toGot fromGot verify | comm" />
        </div>
        <div className="flex gap-[3px] pl-[3px]">
          <Bar list="newScreen: openScreen prev next !previewOpen | hatch:~ square:~ fill:~ | findScreen" />
          <Bar>
            <Combo label="grid" value="16" />
            <Combo label="zoom" value="100%" />
            <Tools list="zoomIn zoomOut |" />
            <Combo label="snap" value="16" />
            <Tools list="gridColor: |" />
            <button type="button" className="w-[22px] font-['Roboto'] text-xs font-bold text-black">
              ON
            </button>
            <button
              type="button"
              className="h-[22px] w-[22px] border border-[#1a1068] bg-linear-to-b from-[#ffd79c] to-[#fdb35a] font-['Roboto'] text-[10px] font-bold text-black"
            >
              OFF
            </button>
            <Tools list="| !devBox sysDev !idBox |" />
            <Combo label="device" value="1" disabled />
          </Bar>
        </div>
        <div className="flex gap-[3px] pl-[3px]">
          <Bar
            className="mr-[7px]"
            list="front forward backward back | group ungroup | flipH flipV rotL rotR | vertex | alignSet | selShape selObject !selBoth | !selectWin | fontScale"
          />
          <Bar list="line polyline rect polygon circle arc sector scale piping | text logoText | paint | image dxf | capture: captureArea:" />
          <Bar list="touch: lamp: numeric: ascii: clock: wordComment: alarmFind alarmInfo: | bolt:^ graph:^" />
          <Bar className="w-[43px]" />
        </div>
      </div>

      <div className="flex min-h-0 flex-1">
        <aside className="flex w-[250px] shrink-0 flex-col">
          <ProjectPanel />
          <PropertyPanel />
        </aside>
        <div className="w-[5px] shrink-0 bg-[#d5e4fb]" />
        <Workspace />
      </div>

      <div className="flex h-[23px] shrink-0 items-end pl-[2px]">
        <button
          type="button"
          className="flex h-[21px] items-center gap-[3px] rounded-t-sm border border-[#7a6548] bg-linear-to-b from-[#fdc274] to-[#ffdfae] px-1 text-xs text-black"
        >
          <Icon name="browser" />
          数据浏览器
        </button>
      </div>
      <div className="flex h-[28px] shrink-0 items-center gap-[3px] pl-[3px]">
        <Bar>
          <div className="flex items-center pl-[3px]">
            <Spin label="X" text="X" />
            <Spin label="Y" text="Y" />
            <Sep />
            <Spin label="width" text="宽度" />
            <Spin label="height" text="高度" />
          </div>
        </Bar>
        <Bar list="alL alC alR | alT alM alB | spH spV | alignSet" />
        <Bar list="dash:~ width:~ pen:~ square:~ hatch:~ fill:~ | charA:~ charD:~ charS:~" />
      </div>

      <footer className="flex h-[19px] shrink-0 items-center justify-end bg-[#f0f0ee] text-xs text-black">
        <StatusCell className="w-5" />
        <StatusCell className="w-[118px]">GT10**-Q(320x240)</StatusCell>
        <StatusCell className="w-[54px]">256颜色</StatusCell>
        <StatusCell className="w-[115px]">MELSEC-QnU/DC</StatusCell>
        <StatusCell className="w-[85px] gap-[10px]">
          <svg viewBox="0 0 15 15" className="-ml-1 size-[15px]" aria-hidden="true">
            <path d="M.5 15V.5H15" stroke="#777" fill="none" />
            <path d="M5.500 1v14M1 5.500h14v9h-9" stroke="#000" strokeDasharray="1 1" fill="none" />
          </svg>
          0,0
        </StatusCell>
        <StatusCell className="w-[116px]">X:10,Y:255</StatusCell>
        <StatusCell className="w-8" />
        <StatusCell className="w-9">NUM</StatusCell>
      </footer>
      <div className="flex h-1 shrink-0 bg-[#060606]">
        <div className="ml-[473px] w-[25px] bg-[#5c6112]" />
        <div className="ml-[293px] w-[160px] bg-[#3a3a3a]" />
      </div>
    </div>
  );
}
